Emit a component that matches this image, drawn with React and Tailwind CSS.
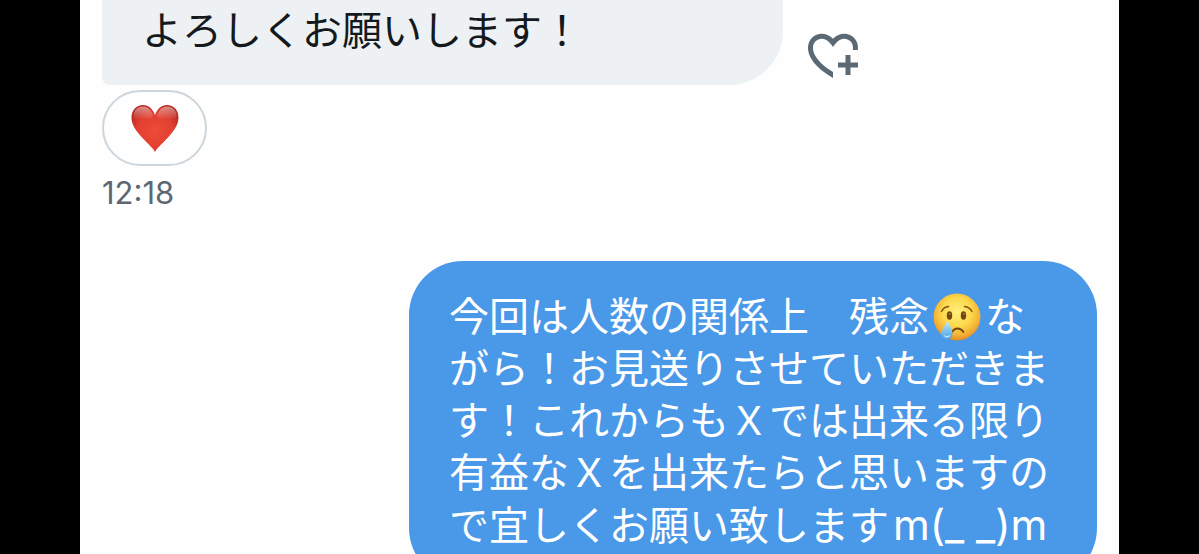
import React from "react";

const HeartPlusIcon = () => (
  <svg viewBox="0 0 24 24" className="w-15 h-15" fill="currentColor" aria-hidden="true">
    <path d="M17 12v3h-2.998v2h3v3h2v-3h3v-2h-3.001v-3H17zm-5 6.839c-3.871-2.34-6.053-4.639-7.127-6.609-1.112-2.04-1.031-3.7-.479-4.82.561-1.13 1.667-1.84 2.91-1.91 1.222-.06 2.68.51 3.892 2.16l.806 1.09.805-1.09c1.211-1.65 2.668-2.22 3.89-2.16 1.242.07 2.347.78 2.908 1.91.334.677.49 1.554.321 2.59h2.011c.153-1.283-.039-2.469-.539-3.48-.887-1.79-2.647-2.91-4.601-3.01-1.65-.09-3.367.56-4.796 2.01-1.43-1.45-3.147-2.1-4.798-2.01-1.954.1-3.714 1.22-4.601 3.01-.896 1.81-.846 4.17.514 6.67 1.353 2.48 4.003 5.12 8.382 7.67l.502.299v-2.32z" />
  </svg>
);

const RedHeart = () => (
  <svg viewBox="0 0 48 48" className="w-12 h-12" role="img" aria-label="ハート">
    <defs>
      <radialGradient id="heartFill" cx="24" cy="27" r="27" gradientUnits="userSpaceOnUse">
        <stop offset="0" stopColor="#ec4c38" />
        <stop offset="0.65" stopColor="#e23f30" />
        <stop offset="1" stopColor="#b92b24" />
      </radialGradient>
      <linearGradient id="heartShine" x1="0" y1="2" x2="0" y2="17" gradientUnits="userSpaceOnUse">
        <stop offset="0" stopColor="#fff" stopOpacity="0.5" />
        <stop offset="0.9" stopColor="#fff" stopOpacity="0" />
      </linearGradient>
    </defs>
    <path
      d="M24 48C22.500 44.500 17.500 40.500 11.500 34C4.500 26.500 .5 20.500 .5 13.500C.5 6 5.500 1 12 1C17.500 1 21.500 4.500 24 11C26.500 4.500 30.500 1 36 1C42.500 1 47.500 6 47.500 13.500C47.500 20.500 43.500 26.500 36.500 34C30.500 40.500 25.500 44.500 24 48Z"
      fill="url(#heartFill)"
    />
    <path
      d="M12 2.500C6.500 2.500 2.500 6.500 2.500 12C3 18 8 18 12 17C17 16 21 15 22 12C20.500 6 17 2.500 12 2.500Z"
      fill="url(#heartShine)"
    />
    <path
      d="M36 2.500C41.500 2.500 45.500 6.500 45.500 12C45 18 40 18 36 17C31 16 27 15 26 12C27.500 6 31 2.500 36 2.500Z"
      fill="url(#heartShine)"
    />
  </svg>
);

const CryingFace = () => (
  <svg
    viewBox="0 0 48 48"
    className="inline-block align-[-2px] w-12 h-12 mx-1 -my-2"
    role="img"
    aria-label="泣き顔"
  >
    <defs>
      <radialGradient id="faceFill" cx="24" cy="19" r="29" gradientUnits="userSpaceOnUse">
        <stop offset="0" stopColor="#fff080" />
        <stop offset="0.5" stopColor="#fcd84c" />
        <stop offset="0.8" stopColor="#f3b134" />
        <stop offset="1" stopColor="#e08a25" />
      </radialGradient>
      <linearGradient id="tearFill" x1="0" y1="27" x2="0" y2="46" gradientUnits="userSpaceOnUse">
        <stop offset="0" stopColor="#d3effb" />
        <stop offset="0.5" stopColor="#86c8f0" />
        <stop offset="1" stopColor="#4ba3e2" />
      </linearGradient>
    </defs>
    <circle cx="24" cy="24" r="23.5" fill="url(#faceFill)" />
    <ellipse cx="16.5" cy="22.5" rx="2.7" ry="4.2" fill="#754511" />
    <ellipse cx="30.5" cy="22.5" rx="2.7" ry="4.2" fill="#754511" />
    <circle cx="17" cy="20.8" r="0.9" fill="#b58a45" />
    <circle cx="31" cy="20.8" r="0.9" fill="#b58a45" />
    <g fill="none" stroke="#855015" strokeWidth="1.5" strokeLinecap="round">
      <path d="M8.5 18.5C10 15.5 12.5 13.8 15.500 13.5" />
      <path d="M31.5 13.5C34.5 13.8 37.5 15.5 39 18.5" />
    </g>
    <path
      d="M19 39C20.5 36.5 22.5 35.5 24.5 35.5C27 35.5 29 36.8 30.5 39"
      fill="none"
      stroke="#754511"
      strokeWidth="1.8"
      strokeLinecap="round"
    />
    <path
      d="M14.5 27C13 32 8.5 36 8.5 40.5C8.5 44 11 46.500 14 46.500C17 46.500 19.5 44 19.5 40.5C19.5 36 16 32 14.5 27Z"
      fill="url(#tearFill)"
    />
    <path d="M11.5 42.5C12.5 44.2 15.5 44.3 16.8 42.3" fill="none" stroke="#d5effc" strokeWidth="1.2" />
  </svg>
);

const ReceivedMessage = () => (
  <div className="flex flex-col items-start">
    <div className="flex items-end gap-5">
      <p className="w-[681px] rounded-bl-lg rounded-br-[54px] bg-[#edf1f3] px-10 pt-[5px] pb-7 text-[40px] leading-[52px] text-[#14191d]">
        よろしくお願いします！
      </p>
      <button aria-label="リアクションを追加" className="text-[#5b6975] cursor-pointer">
        <HeartPlusIcon />
      </button>
    </div>
    <button className="mt-[5px] flex items-center justify-center w-[105px] h-[76px] rounded-full border-2 border-[#cdd6dc] cursor-pointer">
      <RedHeart />
    </button>
    <time className="mt-[7px] text-[31px] leading-10 text-[#5b6872]">12:18</time>
  </div>
);

const SentMessage = () => (
  <div className="flex justify-end">
    <p className="w-[688px] rounded-[54px] bg-[#4a98e8] px-10 py-[30px] text-[40px] leading-[52px] text-white whitespace-nowrap">
      今回は人数の関係上　残念
      <CryingFace />な
      <br />
      がら！お見送りさせていただきま
      <br />
      す！これからもＸでは出来る限り
      <br />
      有益なＸを出来たらと思いますの
      <br />
      で宜しくお願い致します
      <span className="ml-1 text-[42px]">m(_ _)m</span>
    </p>
  </div>
);

const App = () => {
  return (
    <div className="h-screen overflow-hidden bg-black px-20">
      <main
        lang="ja"
        className="flex flex-col gap-12 min-h-full bg-[#fefefe] px-[22px] font-['Inter','Noto_Sans_CJK_JP',sans-serif]"
      >
        <ReceivedMessage />
        <SentMessage />
      </main>
    </div>
  );
};

export default App;
